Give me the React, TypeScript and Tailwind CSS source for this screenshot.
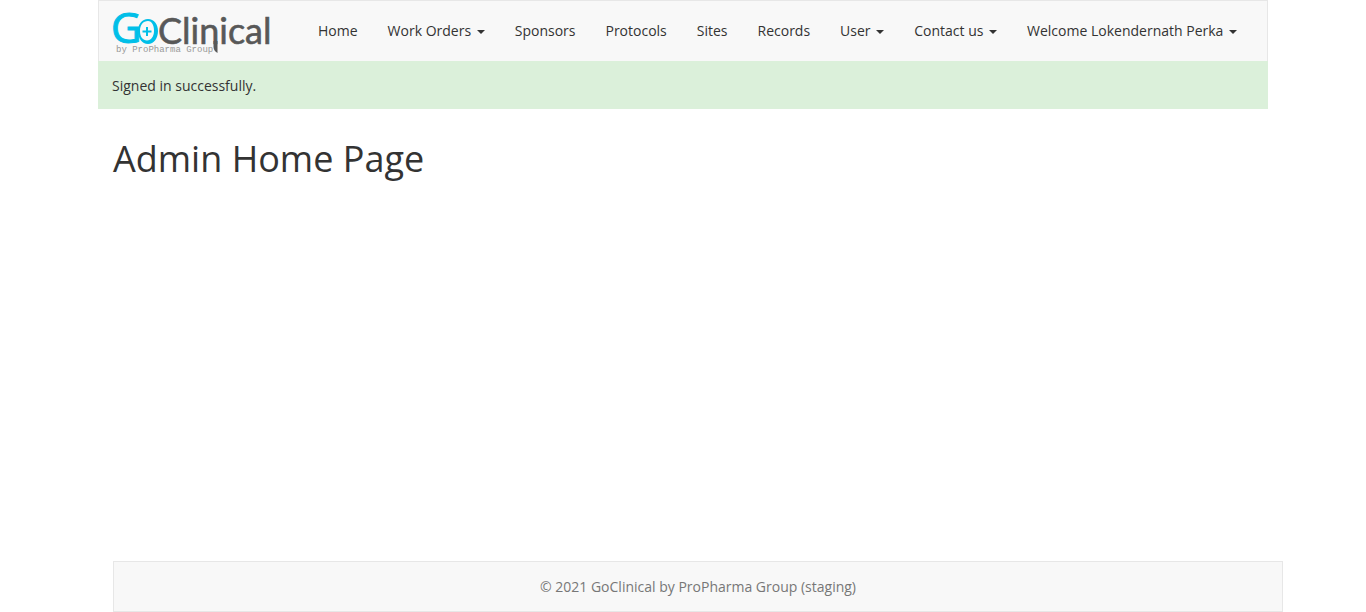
import React from "react";

type NavItem = { label: string; menu?: boolean };

const items: NavItem[] = [
  { label: "Home" },
  { label: "Work Orders", menu: true },
  { label: "Sponsors" },
  { label: "Protocols" },
  { label: "Sites" },
  { label: "Records" },
  { label: "User", menu: true },
  { label: "Contact us", menu: true },
  { label: "Welcome Lokendernath Perka", menu: true },
];

function Caret() {
  return (
    <svg className="ml-0.5 inline-block align-middle" width="8" height="4" viewBox="0 0 8 4" aria-hidden="true">
      <path d="M0 0h8L4 4z" fill="currentColor" />
    </svg>
  );
}

function Logo() {
  return (
    <svg
      className="overflow-visible"
      width="156"
      height="48"
      viewBox="0 0 156 48"
      aria-label="GoClinical by ProPharma Group"
    >
      <text x="-3" y="36" fill="#00bfe8" stroke="#00bfe8" className="font-['Open_Sans',sans-serif] text-[42px]">
        G
      </text>
      <path
        fillRule="evenodd"
        fill="#00bfe8"
        d="M34 12c6 0 10 5 10 12s-4 13-10 13-10-6-10-13 4-12 10-12zm0 2c-5 0-8 4-8 10s3 9.500 7 9.500 7-4 7-9.500-2-10-6-10z"
      />
      <path d="M33 20v9M28.500 24.500h9" stroke="#00bfe8" strokeWidth="2" />
      <text x="44" y="37" fill="#585858" stroke="#585858" strokeWidth="0.6" className="font-['Lato',sans-serif] text-[36px]">
        Clinical
      </text>
      <path d="M99.500 34h4v12c-2-1-4-3-4-6z" fill="#585858" />
      <text x="2" y="45" fill="#999999" className="font-['Liberation_Mono',monospace] text-[9px]">
        by ProPharma Group
      </text>
    </svg>
  );
}

export default function App() {
  return (
    <div className="mx-auto flex min-h-screen max-w-[1170px] flex-col font-['Open_Sans',sans-serif] text-sm text-[#333333]">
      <nav className="flex min-h-[61px] items-center border-x border-t border-[#e7e7e7] bg-[#f8f8f8]">
        <a href="#" className="ml-[15px] mr-[33px] shrink-0">
          <Logo />
        </a>
        <ul className="flex grow flex-wrap">
          {items.map((item) => (
            <li key={item.label}>
              {item.menu ? (
                <button type="button" aria-haspopup="menu" className="whitespace-nowrap px-[15px] py-5">
                  {item.label} <Caret />
                </button>
              ) : (
                <a href="#" className="block px-[15px] py-5">
                  {item.label}
                </a>
              )}
            </li>
          ))}
        </ul>
      </nav>
      <div role="status" className="bg-[#dbf0da] px-3.5 pt-[15px] pb-[13px]">
        Signed in successfully.
      </div>
      <main className="grow px-[15px] pt-[30px]">
        <h1 className="text-4xl">Admin Home Page</h1>
      </main>
      <footer className="relative left-[15px] border border-[#e7e7e7] bg-[#f8f8f8] px-4 pt-[15px] pb-3.5 text-center text-[#777777]">
        © 2021 GoClinical by ProPharma Group (staging)
      </footer>
    </div>
  );
}
